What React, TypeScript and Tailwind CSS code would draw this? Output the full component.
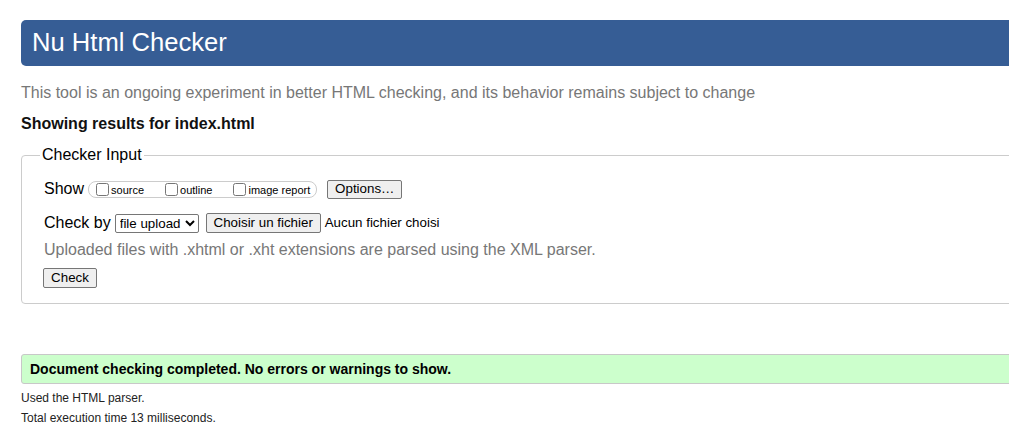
import React from 'react';

export default function App() {
  return (
    <div className="w-[1009px] h-[432px] overflow-hidden bg-white font-['Liberation_Sans',Arial,sans-serif] text-black">
      <div className="w-[1100px] pl-[21px] pt-[20px]">
        {/* Title bar */}
        <h1 className="h-[46px] bg-[#365d95] rounded-[5px] flex items-center pl-[11px] text-white text-[25.6px] leading-none font-normal">
          Nu Html Checker
        </h1>

        <p className="mt-[18px] text-[16px] leading-[18px] text-[#777]">
          This tool is an ongoing experiment in better HTML checking, and its behavior remains subject to change
        </p>

        <p className="mt-[13px] text-[16px] leading-[18px] font-bold text-[#111]">
          Showing results for index.html
        </p>

        {/* Checker input form */}
        <fieldset className="mt-[13px] border border-[#ccc] rounded-[4px] pl-[22px] pb-[14px]">
          <legend className="-ml-[4px] px-[2px] text-[16px] leading-[18px]">Checker Input</legend>

          <div className="mt-[15px] flex items-center h-[20px]">
            <span className="text-[16px] leading-[18px]">Show</span>
            <div className="ml-[4px] h-[17px] flex items-center border border-[#ccc] rounded-[8px] pl-[7px] pr-[6px] gap-[21px]">
              <label className="flex items-center">
                <input type="checkbox" className="m-0 w-[13px] h-[13px]" />
                <span className="ml-[2px] text-[11px] leading-[13px] mt-[2px]">source</span>
              </label>
              <label className="flex items-center">
                <input type="checkbox" className="m-0 w-[13px] h-[13px]" />
                <span className="ml-[2px] text-[11px] leading-[13px] mt-[2px]">outline</span>
              </label>
              <label className="flex items-center">
                <input type="checkbox" className="m-0 w-[13px] h-[13px]" />
                <span className="ml-[2px] text-[11px] leading-[13px] mt-[2px]">image report</span>
              </label>
            </div>
            <button className="ml-[10px] h-[19px] w-[75px] bg-[#efefef] border border-[#767676] rounded-[2px] text-[13.33px] leading-none">
              Options…
            </button>
          </div>

          <div className="mt-[14px] flex items-center h-[20px]">
            <span className="text-[16px] leading-[18px]">Check by</span>
            <select
              defaultValue="file"
              className="ml-[4px] h-[19px] w-[84px] border border-[#767676] rounded-[2px] bg-white text-[13.33px] leading-none"
            >
              <option value="file">file upload</option>
              <option value="uri">address</option>
              <option value="text">text input</option>
            </select>
            <button className="ml-[7px] h-[20px] w-[115px] bg-[#efefef] border border-[#767676] rounded-[2px] text-[13.33px] leading-none">
              Choisir un fichier
            </button>
            <span className="ml-[4px] text-[13.33px] leading-none">Aucun fichier choisi</span>
          </div>

          <p className="mt-[8px] text-[16px] leading-[18px] text-[#777]">
            Uploaded files with .xhtml or .xht extensions are parsed using the XML parser.
          </p>

          <button className="mt-[9px] -ml-[1px] h-[20px] w-[54px] bg-[#efefef] border border-[#767676] rounded-[2px] text-[13.33px] leading-none">
            Check
          </button>
        </fieldset>

        {/* Result summary */}
        <div className="mt-[50px] h-[30px] flex items-center bg-[#ccffcc] border border-[#c8c8c8] rounded-[3px] pl-[8px] text-[14px] font-bold">
          Document checking completed. No errors or warnings to show.
        </div>

        <p className="mt-[4px] text-[12px] leading-[20px] text-[#222]">Used the HTML parser.</p>
        <p className="text-[12px] leading-[20px] text-[#222]">Total execution time 13 milliseconds.</p>
      </div>
    </div>
  );
}
